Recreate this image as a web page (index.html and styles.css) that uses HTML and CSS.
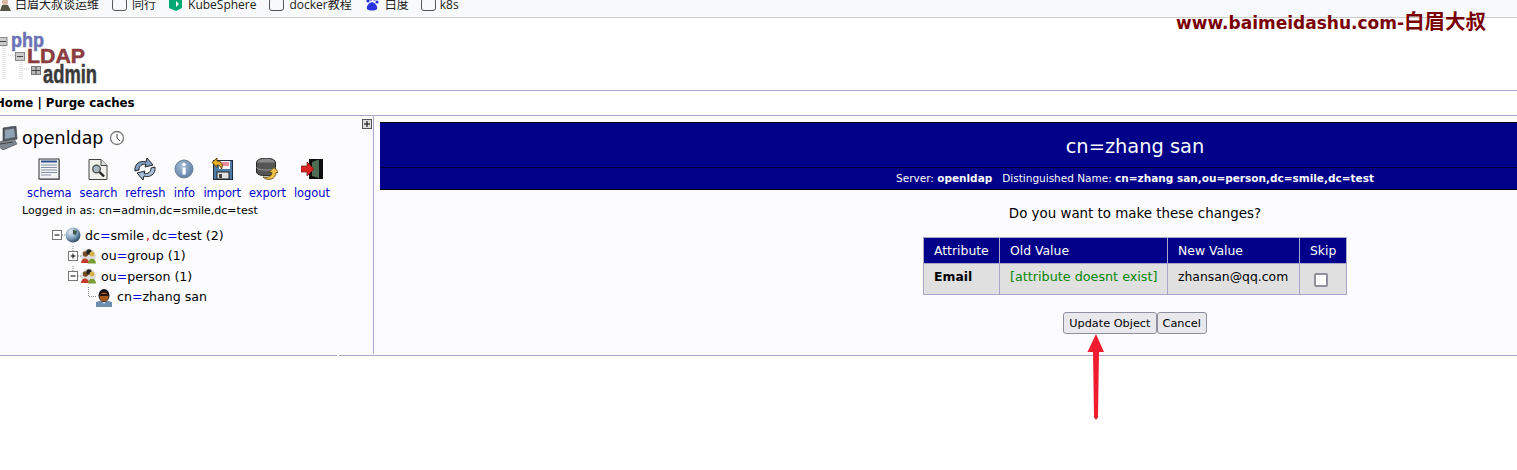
FILE: index.html
```html
<!DOCTYPE html>
<html lang="en">
<head>
  <meta charset="UTF-8">
  <meta name="viewport" content="width=device-width, initial-scale=1.0">
  <title>phpLDAPadmin</title>
  <link rel="stylesheet" href="styles.css">
</head>
<body>
  <div class="bookmarks">
    <div class="bookmark-list">
      <span class="bookmark avatar-mark">
        <svg width="11" height="14" viewBox="0 0 11 14"><circle cx="5" cy="5" r="3" fill="#d9b9a0"/><path d="M0 14 L2 8 H8 L11 14Z" fill="#554"/></svg>
        白眉大叔谈运维
      </span>
      <span class="bookmark"><i class="folder"></i>同行</span>
      <span class="bookmark kube"><svg width="13" height="14" viewBox="0 0 13 14"><path d="M0 3 L7 0 L13 3 V11 L7 14 L0 11Z" fill="#00a971"/><path d="M7 4 L10 7 L7 10Z" fill="#fff"/></svg>KubeSphere</span>
      <span class="bookmark"><i class="folder"></i>docker教程</span>
      <span class="bookmark baidu"><svg width="14" height="14" viewBox="0 0 14 14"><g fill="#2932e1"><circle cx="3" cy="4" r="1.6"/><circle cx="6" cy="2" r="1.6"/><circle cx="9.500" cy="2" r="1.6"/><circle cx="12" cy="5" r="1.6"/><path d="M7 5 C4 6 1 9 2 12 C4 14 10 14 12 12 C13 9 10 6 7 5Z"/></g></svg>白度</span>
      <span class="bookmark last-mark"><i class="folder"></i>k8s</span>
    </div>
  </div>

  <div class="watermark">www.baimeidashu.com-<span class="watermark-cjk">白眉大叔</span></div>

  <header class="logo-bar">
    <svg class="logo" width="98" height="50" viewBox="0 0 98 50">
      <g stroke="#c8c8c8" stroke-dasharray="1 1" fill="none">
        <path d="M3 14 V47 M5 14 V47 M8 23 H15 M20 28 V47 M22 28 V47 M22 37 H30"/>
      </g>
      <rect x="-2" y="5.500" width="9" height="8" fill="#ccc" stroke="#888"/>
      <path d="M0 9.500 H6" stroke="#444"/>
      <rect x="15.500" y="20.500" width="9" height="8" fill="#ccc" stroke="#888"/>
      <path d="M17 24.500 H23" stroke="#444"/>
      <rect x="31.500" y="34.500" width="9" height="8" fill="#bbb" stroke="#777"/>
      <path d="M32 38.500 H40 M36 35 V42" stroke="#444"/>
      <text class="logo-php" x="11" y="15" textLength="33" lengthAdjust="spacingAndGlyphs">php</text>
      <text class="logo-ldap" x="27" y="31" textLength="58" lengthAdjust="spacingAndGlyphs">LDAP</text>
      <text class="logo-admin" x="43" y="51" textLength="54" lengthAdjust="spacingAndGlyphs">admin</text>
    </svg>
  </header>

  <nav class="top-nav"><b>Home | Purge caches</b></nav>

  <div class="page">
    <aside class="tree-panel">
      <svg class="panel-toggle" width="10" height="10" viewBox="0 0 10 10"><rect x=".5" y=".5" width="9" height="9" fill="#ddd" stroke="#555"/><path d="M2 5 H8 M5 2 V8" stroke="#000"/></svg>

      <div class="server-name">
        <svg width="18" height="24" viewBox="0 0 18 24"><path d="M3 2 L16 0 L17 13 L3 16Z" fill="#555c66" stroke="#333" stroke-width=".6"/><path d="M5 4 L14 2.500 L15 11 L5 13Z" fill="#8fa3b5"/><path d="M-2 16 L14 13 L17 18 L3 24 L-2 20Z" fill="#7e8791" stroke="#444" stroke-width=".6"/><path d="M0 18 L13 16" stroke="#444"/></svg>
        <span>openldap</span>
        <svg class="clock" width="16" height="16" viewBox="0 0 16 16"><circle cx="8" cy="8" r="6.500" fill="#fff" stroke="#777" stroke-width="1.300"/><path d="M8 4 V8 L11 11" fill="none" stroke="#444"/></svg>
      </div>

      <div class="tools">
        <a class="tool" href="#">
          <svg width="22" height="22" viewBox="0 0 22 22"><rect x="2" y="2" width="20" height="20" fill="#999"/><rect x="1" y="1" width="20" height="20" fill="#f2f3f5" stroke="#333"/><path d="M3 3.500 H19" stroke="#2d4f86" stroke-width="2"/><path d="M3 7 H19 M3 9.500 H19 M3 12 H19 M3 14.500 H19 M3 17 H13" stroke="#8391a3"/></svg>
          schema
        </a>
        <a class="tool" href="#">
          <svg width="22" height="22" viewBox="0 0 22 22"><path d="M2 1.500 H14 L20 7.500 V21.500 H2Z" fill="#f1f1ec" stroke="#444"/><path d="M14 1.500 V7.500 H20" fill="#ddd" stroke="#444"/><circle cx="9.500" cy="11" r="3.800" fill="#a9b8c4" stroke="#555" stroke-width="1.400"/><path d="M12.500 14 L17 18.500" stroke="#222" stroke-width="2.400"/></svg>
          search
        </a>
        <a class="tool" href="#">
          <svg width="22" height="22" viewBox="0 0 22 22"><path d="M1 13 C0 6 6 2 12 4 L13 0 L19 7 L11 9 L12 6.500 C8 5.500 5 8 5 12Z" fill="#7f9fc4" stroke="#222" stroke-width="1"/><path d="M21 9 C22 16 16 20 10 18 L9 22 L3 15 L11 13 L10 15.500 C14 16.500 17 14 17 10Z" fill="#a7bfd8" stroke="#222" stroke-width="1"/></svg>
          refresh
        </a>
        <a class="tool" href="#">
          <svg width="22" height="22" viewBox="0 0 22 22"><defs><radialGradient id="infoFill" cx=".4" cy=".35" r=".7"><stop offset="0" stop-color="#a6bdd6"/><stop offset="1" stop-color="#5c7ea6"/></radialGradient></defs><circle cx="11" cy="11" r="9" fill="url(#infoFill)" stroke="#6d7c90"/><rect x="9.500" y="9.500" width="3.200" height="7" fill="#fff"/><circle cx="11" cy="6.500" r="1.800" fill="#fff"/></svg>
          info
        </a>
        <a class="tool" href="#">
          <svg width="22" height="22" viewBox="0 0 22 22"><rect x="2.500" y="2.500" width="19" height="19" fill="#4d7ca8" stroke="#1d2c3c"/><rect x="8" y="3" width="11" height="8" fill="#f4f4f4"/><path d="M9 5 H18 M9 7 H18" stroke="#d24"/><rect x="6" y="14" width="12" height="7" fill="#e2e2e2" stroke="#222"/><rect x="8" y="16" width="3" height="4" fill="#444"/><path d="M1 4.500 L6 0 V3 C10.500 3 12.500 6.500 10.500 11 C10 8.500 8.500 7 6 7 V9.500Z" fill="#e8ae2c" stroke="#4b3208" stroke-width=".9"/></svg>
          import
        </a>
        <a class="tool" href="#">
          <svg width="22" height="22" viewBox="0 0 22 22"><ellipse cx="10" cy="4.500" rx="9.500" ry="4.500" fill="#8a8a8a" stroke="#222"/><path d="M.5 4.500 V14 C.5 19 19.500 19 19.500 14 V4.500" fill="#555" stroke="#222"/><path d="M.5 9.500 C3 13 17 13 19.500 9.500" fill="none" stroke="#999"/><path d="M7 19 C12 20.500 16 18 16 14.500 L13 14.500 L18 9.500 L23 14.500 L20 14.500 C20 21 12 24 7 19Z" fill="#ecc04a" stroke="#5a430e" stroke-width=".8"/></svg>
          export
        </a>
        <a class="tool" href="#">
          <svg width="22" height="22" viewBox="0 0 22 22"><rect x="8" y="1" width="14" height="20" fill="#0e0e0e"/><path d="M11 4 L18 1.500 V20 L11 18Z" fill="#4d6e55"/><path d="M0 8 H6 V4 L13 11 L6 18 V14 H0Z" fill="#d82420" stroke="#7a1210" stroke-width=".7"/></svg>
          logout
        </a>
      </div>

      <p class="logged-in">Logged in as: cn=admin,dc=smile,dc=test</p>

      <ul class="tree">
        <li class="tree-row level-0">
          <svg width="13" height="20" viewBox="0 0 13 20"><rect x=".5" y="5.500" width="9" height="9" fill="#fff" stroke="#777"/><path d="M2.500 10 H7.500" stroke="#000"/><path d="M10 10 H13" stroke="#888" stroke-dasharray="1 1"/></svg>
          <svg width="16" height="16" viewBox="0 0 16 16"><defs><radialGradient id="globe" cx=".35" cy=".3" r=".8"><stop offset="0" stop-color="#e6eef5"/><stop offset=".55" stop-color="#7f9fbc"/><stop offset="1" stop-color="#14304c"/></radialGradient></defs><circle cx="8" cy="8" r="7.500" fill="url(#globe)"/><path d="M8 3 L12 4 L11 8 L8 7Z" fill="#3d5b45"/></svg>
          <span class="tree-label">dc<em>=</em>smile<u>,</u>dc<em>=</em>test (2)</span>
        </li>
        <li class="tree-row level-1">
          <svg width="13" height="20" viewBox="0 0 13 20"><path d="M5 0 V5 M10 10 H13" stroke="#888" stroke-dasharray="1 1"/><rect x=".5" y="5.500" width="9" height="9" fill="#fff" stroke="#777"/><path d="M2.500 10 H7.500 M5 7.500 V12.500" stroke="#000"/></svg>
          <svg width="15" height="16" viewBox="0 0 15 16"><circle cx="7.500" cy="8" r="7.500" fill="#ddd"/><circle cx="4.500" cy="6" r="2.700" fill="#7a4a22"/><circle cx="8" cy="4" r="2.700" fill="#222"/><circle cx="11" cy="6" r="2.500" fill="#d8b247"/><path d="M0 15 C0 9 8 9 8 15Z" fill="#c23b2a"/><path d="M7 15.500 C7 9 15 9 15 15.500Z" fill="#7c9c35"/></svg>
          <span class="tree-label">ou<em>=</em>group (1)</span>
        </li>
        <li class="tree-row level-1">
          <svg width="13" height="20" viewBox="0 0 13 20"><path d="M5 0 V5 M10 10 H13" stroke="#888" stroke-dasharray="1 1"/><rect x=".5" y="5.500" width="9" height="9" fill="#fff" stroke="#777"/><path d="M2.500 10 H7.500" stroke="#000"/></svg>
          <svg width="15" height="16" viewBox="0 0 15 16"><circle cx="7.500" cy="8" r="7.500" fill="#ddd"/><circle cx="4.500" cy="6" r="2.700" fill="#7a4a22"/><circle cx="8" cy="4" r="2.700" fill="#222"/><circle cx="11" cy="6" r="2.500" fill="#d8b247"/><path d="M0 15 C0 9 8 9 8 15Z" fill="#c23b2a"/><path d="M7 15.500 C7 9 15 9 15 15.500Z" fill="#7c9c35"/></svg>
          <span class="tree-label">ou<em>=</em>person (1)</span>
        </li>
        <li class="tree-row level-2">
          <svg width="8" height="20" viewBox="0 0 8 20"><path d="M.5 0 V9.500 H8" fill="none" stroke="#888" stroke-dasharray="1 1"/></svg>
          <svg class="user-icon" width="16" height="18" viewBox="0 0 16 18"><path d="M0 18 V13 L5 11.500 H11 L16 13 V18Z" fill="#6f8fb0"/><path d="M6.500 13 L8 15 L9.500 13Z" fill="#dde"/><ellipse cx="8" cy="6.500" rx="5.500" ry="6.500" fill="#111"/><ellipse cx="8" cy="8" rx="4.500" ry="4.500" fill="#a85a1c"/><path d="M4 5 H12 V7 H4Z" fill="#2a1605"/></svg>
          <span class="tree-label">cn<em>=</em>zhang san</span>
        </li>
      </ul>
    </aside>

    <main class="content">
      <div class="title-box">
        <h3 class="title">cn=zhang san</h3>
        <div class="subtitle">Server: <b>openldap</b> &nbsp; Distinguished Name: <b>cn=zhang san,ou=person,dc=smile,dc=test</b></div>
      </div>

      <div class="confirm">
        <p class="question">Do you want to make these changes?</p>
        <table class="changes">
          <thead>
            <tr><th class="col-attr">Attribute</th><th class="col-old">Old Value</th><th class="col-new">New Value</th><th class="col-skip">Skip</th></tr>
          </thead>
          <tbody>
            <tr>
              <td class="attr-name">Email</td>
              <td class="old-value">[attribute doesnt exist]</td>
              <td>zhansan@qq.com</td>
              <td class="skip-cell"><input type="checkbox"></td>
            </tr>
          </tbody>
        </table>
        <div class="actions">
          <button>Update Object</button><button>Cancel</button>
        </div>
      </div>
    </main>
  </div>

  <div class="footer-line"><span class="line-left"></span><span class="line-right"></span></div>

  <svg class="arrow" width="24" height="88" viewBox="0 0 24 88">
    <path d="M12 0 L20 18 H15 L14 83 Q12 88 10 83 L9 18 H3.500Z" fill="#ee1c2e"/>
  </svg>
</body>
</html>
```

FILE: styles.css
```css
* {
  box-sizing: border-box;
}
html, body {
  overflow-x: hidden;
}
body {
  margin: 0;
  font-family: "DejaVu Sans", Verdana, sans-serif;
  font-size: 13px;
  background: #fff;
  color: #000;
  position: relative;
  min-height: 470px;
}
.bookmarks {
  height: 18px;
  overflow: hidden;
  background: #f8f9fb;
  border-bottom: 1px solid #ccc;
  font-family: "Open Sans", "Noto Sans CJK SC", sans-serif;
  font-size: 12px;
  color: #222;
}
.bookmark-list {
  display: flex;
  align-items: center;
  height: 20px;
  margin-top: -6px;
  white-space: nowrap;
}
.bookmark {
  display: flex;
  align-items: center;
  gap: 5px;
  margin-right: 13px;
}
.avatar-mark {
  margin-right: 13px;
  gap: 4px;
}
.kube, .baidu {
  gap: 6px;
}
.last-mark {
  margin-left: -1px;
  gap: 4px;
}
.folder {
  display: block;
  width: 15px;
  height: 13px;
  border: 1px solid #555;
  border-radius: 3px;
}
.watermark {
  position: absolute;
  top: 10px;
  left: 1176px;
  font-size: 17px;
  line-height: 24px;
  font-weight: bold;
  color: #7a0006;
  white-space: nowrap;
  font-family: "DejaVu Sans", "Noto Sans CJK SC", sans-serif;
}
.watermark-cjk {
  font-size: 20.5px;
}
.logo-bar {
  height: 73px;
  padding-top: 14px;
  border-bottom: 1px solid #aaa6cc;
}
.logo {
  display: block;
  overflow: visible;
}
.logo text {
  font-family: "Liberation Sans", sans-serif;
  font-weight: bold;
  stroke-width: .5px;
}
.logo-php {
  font-size: 21px;
  fill: #6c72b4;
  stroke: #6c72b4;
}
.logo-ldap {
  font-size: 21px;
  fill: #8a3c3e;
  stroke: #8a3c3e;
}
.logo-admin {
  font-size: 25px;
  fill: #3a3a3a;
  stroke: #3a3a3a;
}
.top-nav {
  height: 25px;
  line-height: 24px;
  margin-left: -5px;
  font-size: 11.8px;
  border-bottom: 1px solid #aaa6cc;
}
.page {
  display: flex;
  height: 239px;
  background: #fcfcff;
}
.tree-panel {
  position: relative;
  flex: 0 0 374px;
  height: 238px;
  border-right: 1px solid #aaa6cc;
}
.panel-toggle {
  position: absolute;
  top: 3px;
  right: 1px;
}
.server-name {
  display: flex;
  align-items: center;
  height: 26px;
  margin-top: 9px;
  font-size: 17.5px;
}
.server-name span {
  margin-left: 4px;
}
.clock {
  margin-left: 6px;
}
.tools {
  display: flex;
  gap: 8px;
  padding-left: 27px;
  margin-top: 7px;
}
.tool {
  display: flex;
  flex-direction: column;
  align-items: center;
  gap: 6px;
  font-size: 11.4px;
  color: #0000cc;
  text-decoration: none;
}
.logged-in {
  margin: 4px 0 0 22px;
  font-size: 11px;
  line-height: 13px;
  white-space: nowrap;
}
.tree {
  list-style: none;
  margin: 8px 0 0;
  padding: 0;
}
.tree-row {
  display: flex;
  align-items: center;
  height: 20.5px;
  font-size: 12.6px;
  white-space: nowrap;
}
.level-0 {
  padding-left: 52px;
}
.level-1 {
  padding-left: 68px;
}
.level-2 {
  padding-left: 88px;
}
.tree-label {
  margin-left: 5px;
}
.level-0 .tree-label {
  margin-left: 4px;
}
.user-icon {
  margin-top: 3px;
}
.tree-label em {
  font-style: normal;
  color: #0000ee;
}
.tree-label u {
  text-decoration: none;
  color: #e00000;
  margin: 0 2px;
}
.content {
  flex: 1;
  padding: 6px 0 0 6px;
}
.title-box {
  background: #000088;
  color: #fcfcff;
  border-top: 1px solid #000;
  border-bottom: 1px solid #000;
  text-align: center;
}
.title {
  margin: 0;
  height: 45px;
  line-height: 47px;
  padding-left: 373px;
  font-size: 19.4px;
  font-weight: normal;
  border-bottom: 1px solid #000033;
}
.subtitle {
  height: 21px;
  line-height: 21px;
  padding-left: 373px;
  font-size: 10.5px;
  white-space: nowrap;
}
.confirm {
  padding-left: 373px;
  text-align: center;
}
.question {
  margin: 16px 0 15px;
  line-height: 16px;
  font-size: 13.4px;
}
.changes {
  margin: 0 auto;
  border-collapse: collapse;
  text-align: left;
  width: 424px;
  table-layout: fixed;
  font-size: 12.4px;
}
.changes th, .changes td {
  border: 1px solid #aaa6cc;
  padding: 0 10px;
}
.changes th {
  height: 26px;
  font-weight: normal;
  background: #000088;
  color: #fcfcff;
}
.changes td {
  height: 31px;
  background: #e0e0e0;
  padding-bottom: 5px;
  white-space: nowrap;
}
.col-attr {
  width: 76px;
}
.col-old {
  width: 168px;
}
.col-new {
  width: 132px;
}
.attr-name {
  font-weight: bold;
}
.old-value {
  color: #008800;
  font-size: 12.75px;
}
.changes .skip-cell {
  padding: 0 0 0 14px;
}
.skip-cell input {
  appearance: none;
  display: block;
  width: 14px;
  height: 14px;
  margin: 2px 0 0;
  background: #fff;
  border: 2px solid #8f8f9d;
  border-radius: 2px;
}
.actions {
  display: flex;
  justify-content: center;
  margin-top: 17px;
}
.actions button {
  height: 22px;
  padding: 0 5px;
  font-family: inherit;
  font-size: 11.3px;
  background: #e9e9ed;
  border: 1px solid #8f8f9d;
  border-radius: 3px;
  color: #000;
}
.footer-line {
  display: flex;
  gap: 2px;
}
.line-left, .line-right {
  height: 1px;
  background: #aaa6cc;
}
.line-left {
  width: 337px;
}
.line-right {
  flex: 1;
}
.arrow {
  position: absolute;
  left: 1084px;
  top: 334px;
}
```
